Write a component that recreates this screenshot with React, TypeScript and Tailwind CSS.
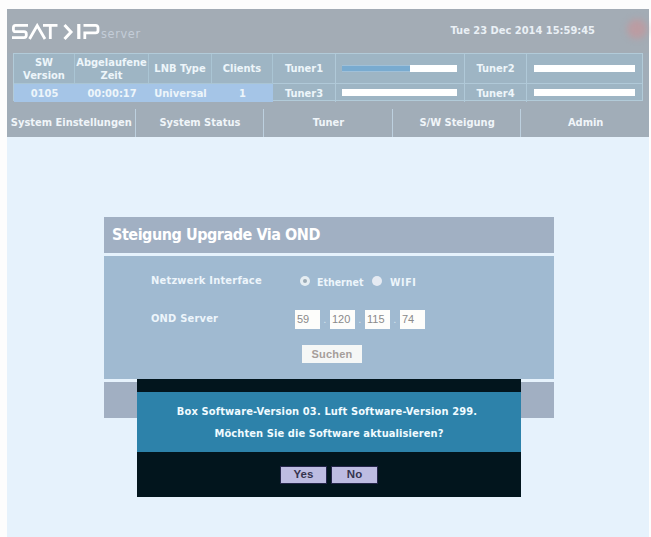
const sans = "font-['DejaVu_Sans_Condensed','DejaVu_Sans',sans-serif]";

const statusColumns = [
  { label: ["SW", "Version"], value: "0105" },
  { label: ["Abgelaufene", "Zeit"], value: "00:00:17" },
  { label: ["LNB Type"], value: "Universal" },
  { label: ["Clients"], value: "1" },
];

const menuItems = ["System Einstellungen", "System Status", "Tuner", "S/W Steigung", "Admin"];

const Logo = () => (
  <div className="flex items-end pt-px text-white">
    <svg width="90" height="18" viewBox="0 0 90 18" fill="none" stroke="white" strokeWidth="2.8">
      <path d="M17 2.4H4.5Q2.4 2.4 2.4 4.8V6.4Q2.4 8.7 4.6 8.7H13Q15.3 8.7 15.3 11V12.3Q15.3 14.6 13 14.6H1" />
      <path d="M18.5 16L26.2 2.6L34 16" />
      <path d="M32 2.4H46.5M39.3 2.4V16" />
      <path d="M53.5 2L60 9L53.5 16" strokeWidth="3" />
      <path d="M67.8 1V16" strokeWidth="3.2" />
      <path d="M73.8 16V9.8H84.5Q87 9.8 87 7.4V4.8Q87 2.4 84.5 2.4H72.5" />
    </svg>
    <span className="text-[12.5px] leading-[14px] tracking-[0.7px] text-[#c4cdd8]">server</span>
  </div>
);

const Meter = ({ used }: { used: number }) => (
  <div className="h-[7px] w-full bg-white">
    <div className="h-full border-y border-[#a0c0d8] bg-[#79abd0]" style={{ width: `${used}%` }} />
  </div>
);

const StatusTable = () => (
  <div className="mx-1.5 grid h-12 grid-cols-[61px_74px_63px_61px_63px_129px_62px_1fr] grid-rows-[30px_18px] border border-[#b2cbd9] bg-[#9eb5c4] text-center text-[11px] leading-[13px] font-bold text-[#edf5fa]">
    {statusColumns.map(({ label }) => (
      <div key={label[0]} className="flex flex-col items-center justify-center border-r border-b border-[#aac5d4] whitespace-nowrap">
        {label.map((line) => (
          <span key={line}>{line}</span>
        ))}
      </div>
    ))}
    <div className="flex items-center justify-center border-r border-b border-[#b0c9d8]">Tuner1</div>
    <div className="flex items-center border-r border-b border-[#b0c9d8] pr-[7px] pl-[6px]">
      <Meter used={59} />
    </div>
    <div className="flex items-center justify-center border-r border-b border-[#b0c9d8]">Tuner2</div>
    <div className="flex items-center border-b border-[#b0c9d8] pr-[7px] pl-[7px]">
      <Meter used={0} />
    </div>

    {statusColumns.map(({ value }) => (
      <div key={value} className="flex items-center justify-center bg-[#a5c5e7]">
        {value}
      </div>
    ))}
    <div className="flex items-center justify-center border-r border-[#b0c9d8]">Tuner3</div>
    <div className="flex items-center border-r border-[#b0c9d8] pr-[7px] pb-px pl-[6px]">
      <Meter used={0} />
    </div>
    <div className="flex items-center justify-center border-r border-[#b0c9d8]">Tuner4</div>
    <div className="flex items-center pr-[7px] pb-px pl-[7px]">
      <Meter used={0} />
    </div>
  </div>
);

const Header = () => (
  <header className="h-32 bg-[#a1adb8]">
    <div className="flex h-11 items-center bg-[#a3acb5] pl-1">
      <Logo />
      <span className="ml-auto text-[11px] font-bold whitespace-nowrap text-[#eaf0f5]">Tue 23 Dec 2014 15:59:45</span>
      <div className="mr-0.5 mb-1 ml-[32px] size-[20px] rounded-full bg-[#bb9ca2] blur-[3px]" />
    </div>
    <StatusTable />
    <nav className="flex h-9 items-end text-[11px] font-bold text-[#f0f5f9]">
      {menuItems.map((item) => (
        <a key={item} className="flex h-7 flex-1 items-center justify-center border-r border-[#bdd0df] pl-px whitespace-nowrap last:border-r-0">
          {item}
        </a>
      ))}
    </nav>
  </header>
);

const UpgradePanel = () => (
  <section className="ml-[97px] w-[450px] font-bold text-[#edf5fb]">
    <h1 className="flex h-9 items-center bg-[#a1b0c3] pl-2 text-[16px] tracking-[-0.46px] text-white">Steigung Upgrade Via OND</h1>
    <div className="mt-[3px] h-[123px] bg-[#a0bad1] pl-[47px] text-[11px]">
      <div className="flex h-[50px] items-center">
        <span className="w-[149px] tracking-[0.22px]">Netzwerk Interface</span>
        <span className="flex size-[10px] items-center justify-center rounded-full bg-[#e5edf2]">
          <span className="size-1 rounded-full bg-[#9baab5]" />
        </span>
        <span className="ml-[7px] w-[55px] pt-[3px] text-[10.5px]">Ethernet</span>
        <span className="size-[10px] rounded-full bg-[#e5eaf2]" />
        <span className="ml-2 pt-[3px] text-[10.5px] tracking-[0.6px]">WIFI</span>
      </div>
      <div className="flex h-[26px] items-center">
        <span className="w-[144px] tracking-[0.2px]">OND Server</span>
        <div className="flex items-center font-['Liberation_Sans',Arial,sans-serif] text-[11px] font-normal text-[#8a8a8a]">
          {["59", "120", "115", "74"].map((octet, i) => (
            <div key={octet} className="flex items-center">
              {i > 0 && <span className="w-[10.5px] text-center text-[#d5e2ec]">.</span>}
              <span className="flex h-[19px] w-[24.5px] items-center bg-[#fdfdfb] pl-0.5">{octet}</span>
            </div>
          ))}
        </div>
      </div>
      <button className="mt-[13px] ml-[151px] flex h-[18px] w-[60px] items-center justify-center bg-[#f5f7f6] font-['Liberation_Sans',Arial,sans-serif] text-[11px] font-bold tracking-[0.2px] text-[#a59e9a]">
        Suchen
      </button>
    </div>
    <div className="mt-[3px] h-9 bg-[#a1afc2]" />
  </section>
);

const UpdateDialog = () => (
  <div role="dialog" className="absolute top-[379px] left-[137px] h-[118px] w-[384px] bg-[#02151d] pt-[13px] font-bold">
    <div className="flex h-[60px] flex-col items-center justify-center bg-[#2d82aa] pt-0.5 text-[11px] leading-[22px] whitespace-nowrap text-[#f0fbff]">
      <p className="-ml-1 tracking-[0.14px]">Box Software-Version 03. Luft Software-Version 299.</p>
      <p className="tracking-[0.09px]">Möchten Sie die Software aktualisieren?</p>
    </div>
    <div className="mt-[14px] flex justify-center gap-1 font-['Liberation_Sans',Arial,sans-serif] text-[11.5px] text-[#35344f]">
      <button className="h-[18px] w-[47px] border border-[#25254a] bg-[#bdbce1] leading-none">Yes</button>
      <button className="h-[18px] w-[47px] border border-[#25254a] bg-[#bdbce1] leading-none">No</button>
    </div>
  </div>
);

export default function App() {
  return (
    <div className={`relative h-[537px] w-[651px] overflow-hidden bg-[#fdfdfd] pt-[9px] pr-[2px] pl-[7px] ${sans}`}>
      <main className="h-full bg-[#e6f2fc]">
        <Header />
        <div className="h-20" />
        <UpgradePanel />
      </main>
      <UpdateDialog />
    </div>
  );
}
